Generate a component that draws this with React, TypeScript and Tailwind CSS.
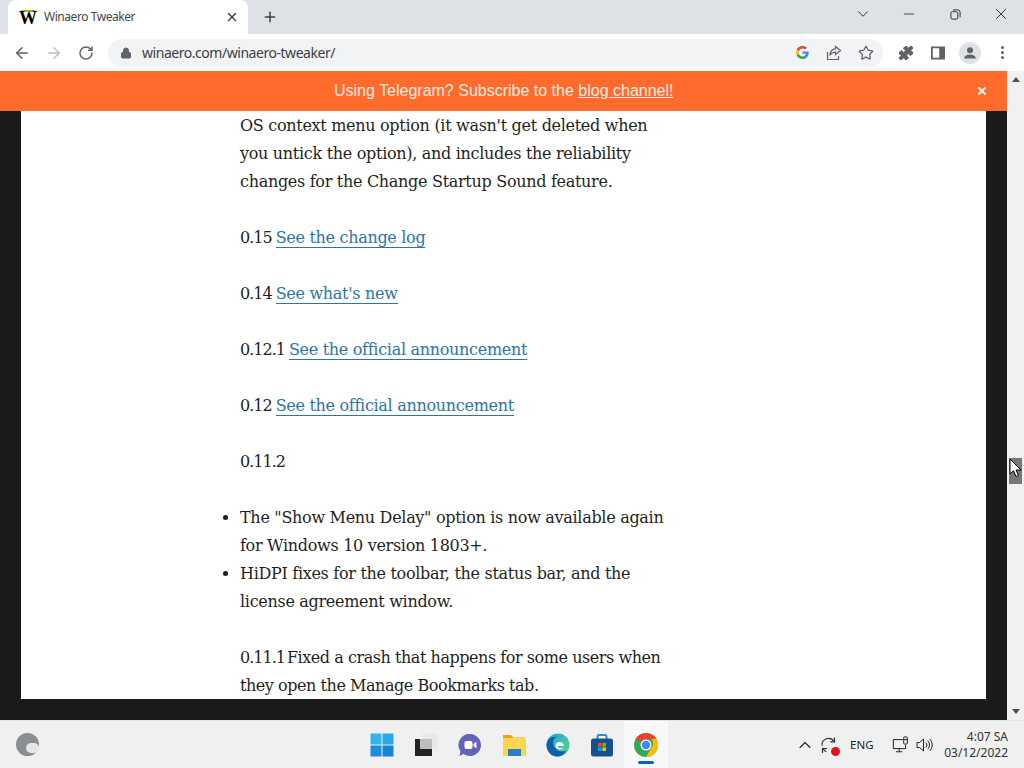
import { ArrowLeft, ArrowRight, RotateCw, Lock, Star, Puzzle, ChevronDown, ChevronUp, Minus, X, Plus } from "lucide-react";

function GoogleG() {
    return (
        <svg viewBox="0 0 48 48" className="w-[13px] h-[13px]">
            <path fill="#EA4335" d="M24 9.500c3.500 0 6.700 1.200 9.200 3.600l6.900-6.900C35.900 2.400 30.400 0 24 0 14.600 0 6.500 5.400 2.600 13.200l8 6.200C12.400 13.600 17.700 9.500 24 9.500z" />
            <path fill="#4285F4" d="M46.900 24.500c0-1.600-.1-3.100-.4-4.500H24v9h12.900c-.6 3-2.200 5.500-4.700 7.200l7.700 6c4.500-4.200 7-10.300 7-17.700z" />
            <path fill="#FBBC05" d="M10.600 28.600c-.5-1.400-.8-3-.8-4.600s.3-3.200.8-4.600l-8-6.200C.9 16.500 0 20.100 0 24s.9 7.500 2.600 10.800l8-6.200z" />
            <path fill="#34A853" d="M24 48c6.500 0 11.900-2.100 15.900-5.800l-7.700-6c-2.200 1.400-4.900 2.300-8.200 2.300-6.300 0-11.600-4.100-13.400-9.900l-8 6.200C6.500 42.600 14.600 48 24 48z" />
        </svg>
    );
}

function ShareIcon() {
    return (
        <svg viewBox="0 0 16 16" className="w-4 h-4" fill="none" stroke="#5f6368" strokeWidth="1.200">
            <path d="M1.500 7v7.500h11V11" />
            <path d="M9.500 1.500 14.500 5.500 9.500 9.500V7.200C7 7.200 5 8.200 3.700 10.500 4 7 6 4 9.500 3.800z" />
        </svg>
    );
}

function SidePanelIcon() {
    return (
        <svg viewBox="0 0 16 16" className="w-4 h-4">
            <path fill="#5f6368" fillRule="evenodd" d="M1 1.500h14v13H1zM2.800 3.200v9.600h6.400V3.200z" />
        </svg>
    );
}

function ProfileIcon() {
    return (
        <div className="w-[22px] h-[22px] rounded-full bg-[#dee1e6] flex items-center justify-center">
            <svg viewBox="0 0 16 16" className="w-4 h-4" fill="#5f6368">
                <circle cx="8" cy="5.300" r="3" />
                <path d="M2.200 13.500c0-2.700 3.300-4 5.800-4s5.800 1.300 5.800 4z" />
            </svg>
        </div>
    );
}

function RestoreIcon() {
    return (
        <svg viewBox="0 0 12 12" className="w-[11px] h-[11px]" fill="none" stroke="#222" strokeWidth="1">
            <rect x="1" y="3" width="7.500" height="8" rx="1.500" />
            <path d="M3.200 1h5.300a2.500 2.500 0 0 1 2.500 2.500V9" />
        </svg>
    );
}

function WindowsLogo() {
    return (
        <svg viewBox="0 0 24 24" className="w-6 h-6">
            <rect x="0.500" y="0.500" width="11" height="11" fill="#2fb6ee" />
            <rect x="12.500" y="0.500" width="11" height="11" fill="#28a8e6" />
            <rect x="0.500" y="12.500" width="11" height="11" fill="#1a90dc" />
            <rect x="12.500" y="12.500" width="11" height="11" fill="#1486d4" />
        </svg>
    );
}

function TaskViewIcon() {
    return (
        <svg viewBox="0 0 24 24" className="w-6 h-6">
            <rect x="8" y="1" width="15" height="15" fill="#e8e8e8" />
            <rect x="1" y="6" width="17" height="17" fill="#222" />
            <rect x="6" y="6" width="12" height="10" fill="#bdbdbd" />
        </svg>
    );
}

function MeetIcon() {
    return (
        <svg viewBox="0 0 24 24" className="w-6 h-6">
            <path fill="#6264b8" d="M12 1a11 11 0 1 1-6.500 19.900L1.500 23l.9-4.800A11 11 0 0 1 12 1z" />
            <rect x="6.500" y="8" width="8" height="8" rx="2" fill="#fff" />
            <path fill="#fff" d="M15.500 11 18.500 8.500V15.500L15.500 13z" />
        </svg>
    );
}

function FolderIcon() {
    return (
        <svg viewBox="0 0 24 24" className="w-6 h-6">
            <path fill="#e0a81e" d="M1 2h8l2.500 2.500H23V8H1z" />
            <rect x="1" y="5" width="23" height="18" fill="#fbd54d" />
            <rect x="6" y="16" width="13" height="7" fill="#2a7fc4" />
        </svg>
    );
}

function EdgeIcon() {
    return (
        <svg viewBox="0 0 24 24" className="w-6 h-6">
            <defs>
                <linearGradient id="edgeTop" x1="0" y1="0" x2="1" y2="1">
                    <stop offset="0" stopColor="#1f9fd6" />
                    <stop offset="1" stopColor="#5fdc86" />
                </linearGradient>
            </defs>
            <circle cx="12" cy="12" r="11.500" fill="url(#edgeTop)" />
            <path fill="#0f5fa8" d="M.5 12C1 6 6 3 11 4c-4 1-4.500 5-3.500 8 1.300 4.500 7 8 13 5.500-2.500 4-6 6-9.500 6C5 23.500.5 18 .5 12z" />
            <path fill="#fff" d="M11.500 9.500c3-1.200 6 .2 6.500 3.500h-6c-.5 1.500 1.500 3 6 2-2.500 2-6.500 2-8-.5-1.200-2 0-4.200 1.500-5z" />
        </svg>
    );
}

function StoreIcon() {
    return (
        <svg viewBox="0 0 24 24" className="w-6 h-6">
            <path fill="none" stroke="#2a8fc8" strokeWidth="2" d="M7.500 6V3.500a1.500 1.500 0 0 1 1.500-1.500h6a1.500 1.500 0 0 1 1.500 1.500V6" />
            <rect x="1" y="5.500" width="22" height="18" rx="2.500" fill="#15508f" />
            <rect x="8" y="10" width="3.600" height="3.600" fill="#f25022" />
            <rect x="12.400" y="10" width="3.600" height="3.600" fill="#7fba00" />
            <rect x="8" y="14.400" width="3.600" height="3.600" fill="#00a4ef" />
            <rect x="12.400" y="14.400" width="3.600" height="3.600" fill="#ffb900" />
        </svg>
    );
}

function ChromeIcon() {
    return (
        <svg viewBox="0 0 24 24" className="w-6 h-6">
            <circle cx="12" cy="12" r="12" fill="#34a853" />
            <path fill="#ea4335" d="M12 0a12 12 0 0 1 10.400 6H12a6 6 0 0 0-5.200 3L1.600 6A12 12 0 0 1 12 0z" />
            <path fill="#fbbc05" d="M22.400 6A12 12 0 0 1 12 24l5.200-9a6 6 0 0 0 0-9z" />
            <circle cx="12" cy="12" r="5.500" fill="#fff" />
            <circle cx="12" cy="12" r="4.200" fill="#4285f4" />
        </svg>
    );
}

function NetworkIcon() {
    return (
        <svg viewBox="0 0 20 20" className="w-[18px] h-[18px]" fill="none" stroke="#222" strokeWidth="1.100">
            <path d="M12 4H1.500v10H15v-4" />
            <path d="M8 14v3M4.500 17.500h7" />
            <rect x="13" y="1" width="4" height="8" rx="1" />
            <path d="M13 4h4" />
        </svg>
    );
}

function VolumeIcon() {
    return (
        <svg viewBox="0 0 18 16" className="w-[18px] h-4" fill="none" stroke="#222" strokeWidth="1">
            <path d="M1 5.500h2.500L7.500 2v12l-4-3.500H1z" />
            <path d="M9.800 5.500a3.500 3.500 0 0 1 0 5" />
            <path d="M11.800 3.800a6 6 0 0 1 0 8.400" />
            <path d="M13.800 2a8.500 8.500 0 0 1 0 12" />
        </svg>
    );
}

function TrayStatusIcon() {
    return (
        <div className="relative w-[18px] h-[18px]">
            <svg viewBox="0 0 18 18" className="w-[18px] h-[18px]" fill="none" stroke="#333" strokeWidth="1.200">
                <path d="M2 9.500A6.500 6.500 0 0 1 14 5.500" />
                <path d="M14.500 1.500v4.300h-4.300" />
                <path d="M2.500 17v-4.300h4.300" />
                <path d="M3 12.800a6.500 6.500 0 0 0 3.500 3" />
            </svg>
            <div className="absolute right-[-2px] bottom-[-2px] w-[9px] h-[9px] rounded-full bg-[#e81123]" />
        </div>
    );
}

function Cursor() {
    return (
        <svg viewBox="0 0 13 20" className="absolute left-[1009px] top-[458px] w-[13px] h-[20px]">
            <path fill="#fff" stroke="#000" strokeWidth="1" d="M1 1v15l3.500-3.300L7 18.500l2.500-1-2.500-5.500h5z" />
        </svg>
    );
}

function Link({ children }: { children: string }) {
    return <a className="text-[#2b75a8] border-b border-[#2b75a8]">{children}</a>;
}

function Ver({ children }: { children: string }) {
    return <span className="tracking-[-1px] mr-[4px]">{children}</span>;
}

export default function App() {
    return (
        <div className="relative w-[1024px] h-[768px] overflow-hidden flex flex-col bg-white font-['Noto_Sans',sans-serif]">
            {/* tab strip */}
            <div className="h-[34px] shrink-0 bg-[#dee1e6] flex pl-2">
                <div className="w-[240px] bg-white rounded-t-lg flex items-center pl-[12px] pr-[9px]">
                    <div className="w-4 flex flex-col items-center">
                        <div className="w-[14px] h-[2px] bg-gradient-to-r from-[#c9b838] to-[#6fa040]" />
                        <span className="font-['Liberation_Serif',serif] font-bold text-[18px] leading-[12px] text-black">W</span>
                    </div>
                    <span className="ml-2 text-xs tracking-[-0.45px] text-[#45474a] flex-1">Winaero Tweaker</span>
                    <X className="w-[14px] h-[14px] text-[#45474a]" strokeWidth={2.500} />
                </div>
                <div className="ml-[14px] flex items-center">
                    <Plus className="w-[16px] h-[16px] text-[#3c4043]" strokeWidth={2.200} />
                </div>
                <div className="flex-1" />
                <div className="flex items-center pb-[6px]">
                    <div className="w-[46px] flex justify-center"><ChevronDown className="w-[18px] h-[18px] text-[#222]" strokeWidth={1.200} /></div>
                    <div className="w-[46px] flex justify-center"><Minus className="w-[16px] h-[16px] text-[#222]" strokeWidth={1.200} /></div>
                    <div className="w-[46px] flex justify-center"><RestoreIcon /></div>
                    <div className="w-[46px] flex justify-center"><X className="w-[18px] h-[18px] text-[#222]" strokeWidth={1.200} /></div>
                </div>
            </div>

            {/* toolbar */}
            <div className="h-[37px] shrink-0 bg-white flex items-center pl-[6px] pr-[6px]">
                <div className="w-8 flex justify-center"><ArrowLeft className="w-[18px] h-[18px] text-[#5f6368]" strokeWidth={2} /></div>
                <div className="w-8 flex justify-center"><ArrowRight className="w-[18px] h-[18px] text-[#bdc1c6]" strokeWidth={2} /></div>
                <div className="w-8 flex justify-center"><RotateCw className="w-4 h-4 text-[#5f6368]" strokeWidth={2.200} /></div>
                <div className="ml-[6px] w-[775px] h-[28px] rounded-full bg-[#f1f3f4] flex items-center pl-[12px] pr-px">
                    <Lock className="w-3 h-3 text-[#5f6368] fill-[#5f6368]" strokeWidth={2} />
                    <span className="ml-[10px] flex-1 text-[14px] tracking-[-0.46px] text-[#3c4043]">winaero.com/winaero-tweaker/</span>
                    <div className="w-8 flex justify-center"><GoogleG /></div>
                    <div className="w-8 flex justify-center"><ShareIcon /></div>
                    <div className="w-8 flex justify-center"><Star className="w-4 h-4 text-[#5f6368]" strokeWidth={1.800} /></div>
                </div>
                <div className="ml-[7px] w-8 flex justify-center"><Puzzle className="w-4 h-4 text-[#5f6368] fill-[#5f6368]" strokeWidth={1.500} /></div>
                <div className="w-8 flex justify-center"><SidePanelIcon /></div>
                <div className="w-8 flex justify-center"><ProfileIcon /></div>
                <div className="w-8 flex flex-col items-center gap-[2px]">
                    <span className="w-[3px] h-[3px] rounded-full bg-[#5f6368]" />
                    <span className="w-[3px] h-[3px] rounded-full bg-[#5f6368]" />
                    <span className="w-[3px] h-[3px] rounded-full bg-[#5f6368]" />
                </div>
            </div>

            {/* page + scrollbar */}
            <div className="h-[649px] shrink-0 flex">
                <div className="w-[1007px] flex flex-col bg-[#1a1a1a]">
                    <div className="h-[40px] shrink-0 bg-[#fe6b2c] flex items-center pl-[334px] pr-[19px] font-['Liberation_Sans',sans-serif] text-[16px] text-[#fdece4]">
                        <span className="flex-1">Using Telegram? Subscribe to the <u>blog channel!</u></span>
                        <X className="w-[12px] h-[12px] text-[#fff4ee]" strokeWidth={4} />
                    </div>
                    <div className="h-[588px] shrink-0 mx-[21px] bg-white pl-[219px] pt-px text-[#1f1f1f] font-['DejaVu_Serif',serif] text-[16px] tracking-[-0.3px] leading-7">
                        <div className="w-[432px]">
                            <p className="mb-7">OS context menu option (it wasn't get deleted when you untick the option), and includes the reliability changes for the Change Startup Sound feature.</p>
                            <p className="mb-7"><Ver>0.15</Ver><Link>See the change log</Link></p>
                            <p className="mb-7"><Ver>0.14</Ver><Link>See what's new</Link></p>
                            <p className="mb-7"><Ver>0.12.1</Ver><Link>See the official announcement</Link></p>
                            <p className="mb-7"><Ver>0.12</Ver><Link>See the official announcement</Link></p>
                            <p className="mb-7"><span className="tracking-[-1px]">0.11.2</span></p>
                            <ul className="mb-7 list-disc">
                                <li>The "Show Menu Delay" option is now available again for Windows 10 version 1803+.</li>
                                <li>HiDPI fixes for the toolbar, the status bar, and the license agreement window.</li>
                            </ul>
                            <p className="tracking-[-0.45px]"><span className="tracking-[-1px] mr-[2px]">0.11.1</span>Fixed a crash that happens for some users when<br />they open the Manage Bookmarks tab.</p>
                        </div>
                    </div>
                </div>
                <div className="w-[17px] bg-[#f1f1f1] flex flex-col items-center">
                    <div className="h-[17px] flex items-center justify-center">
                        <div className="border-x-[4px] border-x-transparent border-b-[5px] border-b-[#505050]" />
                    </div>
                    <div className="h-[370px]" />
                    <div className="w-[13px] h-[26px] bg-[#787878]" />
                    <div className="flex-1" />
                    <div className="h-[17px] flex items-center justify-center">
                        <div className="border-x-[4px] border-x-transparent border-t-[5px] border-t-[#505050]" />
                    </div>
                </div>
            </div>

            {/* taskbar */}
            <div className="h-[48px] shrink-0 bg-[#f0f0f0] border-t border-[#e4e4e4] flex items-center relative">
                <div className="w-[360px] pl-4 flex items-center">
                    <div className="w-[23px] h-[23px] rounded-full bg-[#8a8d92] flex items-end justify-end pb-[3px]">
                        <div className="w-[13px] h-[10px] rounded-full bg-[#e6e6e6]" />
                    </div>
                </div>
                <div className="flex items-center">
                    <div className="w-[44px] flex justify-center"><WindowsLogo /></div>
                    <div className="w-[44px] flex justify-center"><TaskViewIcon /></div>
                    <div className="w-[44px] flex justify-center"><MeetIcon /></div>
                    <div className="w-[44px] flex justify-center"><FolderIcon /></div>
                    <div className="w-[44px] flex justify-center"><EdgeIcon /></div>
                    <div className="w-[44px] flex justify-center"><StoreIcon /></div>
                    <div className="w-[44px] h-[47px] bg-[#f8f8f8] flex flex-col items-center justify-center relative">
                        <ChromeIcon />
                        <div className="absolute bottom-[4px] w-[16px] h-[3px] rounded-full bg-[#0067c0]" />
                    </div>
                </div>
                <div className="flex-1 flex items-center pr-4 text-[#222]">
                    <ChevronUp className="ml-[127px] w-5 h-5" strokeWidth={1.300} />
                    <div className="ml-[5px]"><TrayStatusIcon /></div>
                    <span className="ml-[12px] text-[11.500px]">ENG</span>
                    <div className="ml-[18px]"><NetworkIcon /></div>
                    <div className="ml-[6px]"><VolumeIcon /></div>
                    <div className="flex-1 text-right text-[12px] leading-4 text-[#333]">
                        <div>4:07 SA</div>
                        <div>03/12/2022</div>
                    </div>
                </div>
            </div>

            <Cursor />
        </div>
    );
}
